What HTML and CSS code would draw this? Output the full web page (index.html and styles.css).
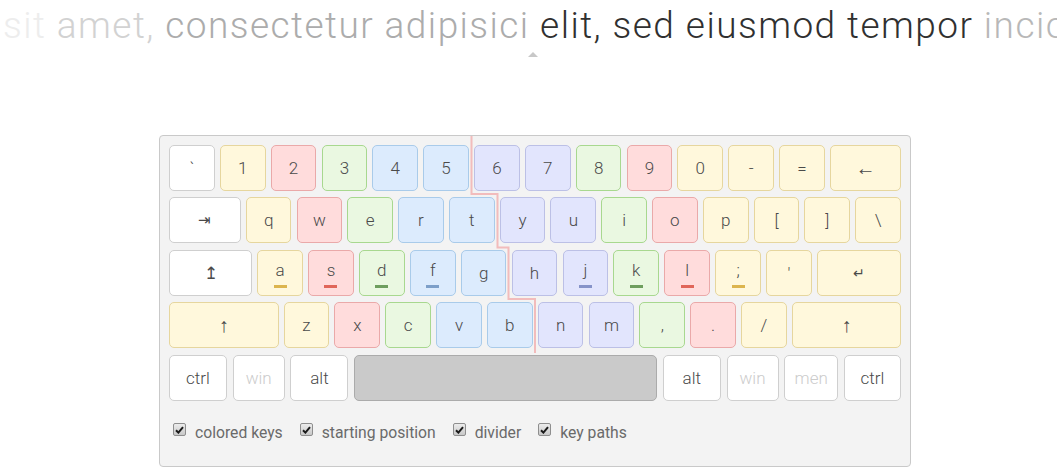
FILE: index.html
```html
<!DOCTYPE html>
<html lang="en">
<head>
    <meta charset="UTF-8">
    <title>Typing Trainer</title>
    <link rel="stylesheet" href="styles.css">
</head>
<body>
    <div class="ticker">
        <span class="t-gone">sit </span><span class="t-fade">amet, </span><span class="t-done">consectetur adipisici </span><span class="t-now">elit, sed eiusmod tempor </span><span class="t-next">incic</span>
    </div>
    <div class="caret"></div>

    <div class="keyboard">
        <svg class="divider" width="752" height="240" viewBox="0 0 752 240">
            <polyline points="311.5,0 311.5,58 337.5,58 337.5,111.5 348.5,111.5 348.5,163 375,163 375,217" fill="none" stroke="#f2bcbc" stroke-width="2"/>
        </svg>

        <div class="row">
            <div class="key white">`</div>
            <div class="key yellow">1</div>
            <div class="key red">2</div>
            <div class="key green">3</div>
            <div class="key blue">4</div>
            <div class="key blue">5</div>
            <div class="key purple">6</div>
            <div class="key purple">7</div>
            <div class="key green">8</div>
            <div class="key red">9</div>
            <div class="key yellow">0</div>
            <div class="key yellow">-</div>
            <div class="key yellow">=</div>
            <div class="key yellow backspace">&larr;</div>
        </div>
        <div class="row">
            <div class="key white tab">&#8677;</div>
            <div class="key yellow">q</div>
            <div class="key red">w</div>
            <div class="key green">e</div>
            <div class="key blue">r</div>
            <div class="key blue">t</div>
            <div class="key purple">y</div>
            <div class="key purple">u</div>
            <div class="key green">i</div>
            <div class="key red">o</div>
            <div class="key yellow">p</div>
            <div class="key yellow">[</div>
            <div class="key yellow">]</div>
            <div class="key yellow">\</div>
        </div>
        <div class="row">
            <div class="key white caps">&#8613;</div>
            <div class="key yellow home">a<span class="bar"></span></div>
            <div class="key red home">s<span class="bar"></span></div>
            <div class="key green home">d<span class="bar"></span></div>
            <div class="key blue home">f<span class="bar"></span></div>
            <div class="key blue">g</div>
            <div class="key purple">h</div>
            <div class="key purple home">j<span class="bar"></span></div>
            <div class="key green home">k<span class="bar"></span></div>
            <div class="key red home">l<span class="bar"></span></div>
            <div class="key yellow home">;<span class="bar"></span></div>
            <div class="key yellow">'</div>
            <div class="key yellow enter">&#8629;</div>
        </div>
        <div class="row">
            <div class="key yellow shift-l">&uarr;</div>
            <div class="key yellow">z</div>
            <div class="key red">x</div>
            <div class="key green">c</div>
            <div class="key blue">v</div>
            <div class="key blue">b</div>
            <div class="key purple">n</div>
            <div class="key purple">m</div>
            <div class="key green">,</div>
            <div class="key red">.</div>
            <div class="key yellow">/</div>
            <div class="key yellow shift-r">&uarr;</div>
        </div>
        <div class="row">
            <div class="key white mod-ctrl">ctrl</div>
            <div class="key white mod-win off">win</div>
            <div class="key white mod-alt">alt</div>
            <div class="key space"></div>
            <div class="key white mod-alt">alt</div>
            <div class="key white mod-win off">win</div>
            <div class="key white mod-men off">men</div>
            <div class="key white mod-ctrl2">ctrl</div>
        </div>

        <div class="options">
            <label class="option"><span class="check"><svg width="9" height="8" viewBox="0 0 9 8"><path d="M1 4.2 L3.4 6.6 L8 1.2" fill="none" stroke="#1a1a1a" stroke-width="2"/></svg></span>colored keys</label>
            <label class="option"><span class="check"><svg width="9" height="8" viewBox="0 0 9 8"><path d="M1 4.2 L3.4 6.6 L8 1.2" fill="none" stroke="#1a1a1a" stroke-width="2"/></svg></span>starting position</label>
            <label class="option"><span class="check"><svg width="9" height="8" viewBox="0 0 9 8"><path d="M1 4.2 L3.4 6.6 L8 1.2" fill="none" stroke="#1a1a1a" stroke-width="2"/></svg></span>divider</label>
            <label class="option"><span class="check"><svg width="9" height="8" viewBox="0 0 9 8"><path d="M1 4.2 L3.4 6.6 L8 1.2" fill="none" stroke="#1a1a1a" stroke-width="2"/></svg></span>key paths</label>
        </div>
    </div>
</body>
</html>
```

FILE: styles.css
```css
* {
    margin: 0;
    padding: 0;
    box-sizing: border-box;
    font-family: Roboto, "Liberation Sans", sans-serif;
}

body {
    background-color: white;
    width: 1057px;
    overflow: hidden;
}

/* Scrolling text line */
.ticker {
    white-space: nowrap;
    overflow: hidden;
    width: 1057px;
    height: 50px;
    padding-left: 3px;
    font-size: 37px;
    font-weight: 300;
    letter-spacing: 1.45px;
    line-height: 52px;
}

.t-gone { color: #ededed; }
.t-fade { color: #d2d2d2; }
.t-done { color: #acacac; }
.t-now  { color: #303030; }
.t-next { color: #b8b8b8; }

.caret {
    width: 0;
    height: 0;
    margin: 2px 0 0 528px;
    border-left: 5px solid transparent;
    border-right: 5px solid transparent;
    border-bottom: 5px solid #c8c8c8;
}

/* Keyboard */
.keyboard {
    position: relative;
    width: 752px;
    margin: 78px 0 0 159px;
    padding: 9px 9px 0 9px;
    background-color: #f3f3f3;
    border: 1px solid #c9c9c9;
    border-radius: 4px;
    height: 332px;
}

.divider {
    position: absolute;
    top: 0;
    left: 0;
    z-index: 2;
}

.row {
    display: flex;
    justify-content: space-between;
    margin-bottom: 6.4px;
}

.key {
    position: relative;
    width: 45.7px;
    height: 46px;
    display: flex;
    align-items: center;
    justify-content: center;
    border: 1px solid #cfcfcf;
    border-radius: 5px;
    font-size: 17px;
    font-weight: 300;
    color: #4a4a4a;
}

.white  { background-color: #ffffff; border-color: #cfcfcf; }
.yellow { background-color: #fff8dc; border-color: #e6d69e; }
.red    { background-color: #ffdcdc; border-color: #eaa9a9; }
.green  { background-color: #eaf8e1; border-color: #a8d88f; }
.blue   { background-color: #dcebfd; border-color: #a9cbea; }
.purple { background-color: #e2e5fd; border-color: #bcc0e6; }

.space {
    width: 303px;
    background-color: #cacaca;
    border-color: #ababab;
}

.backspace { width: 71px; font-size: 20px; }
.tab       { width: 71.7px; font-size: 15px; }
.caps      { width: 83px; }
.enter     { width: 84px; font-size: 14px; }
.shift-l   { width: 109.5px; font-size: 20px; }
.shift-r   { width: 109px; font-size: 20px; }

.mod-ctrl  { width: 58px; }
.mod-ctrl2 { width: 57px; }
.mod-win   { width: 52px; }
.mod-alt   { width: 58px; }
.mod-men   { width: 54px; }

.off {
    color: #cccccc;
}

.home {
    padding-bottom: 6px;
}

.bar {
    position: absolute;
    bottom: 7px;
    left: 50%;
    width: 13px;
    height: 3px;
    margin-left: -6.5px;
}

.yellow .bar { background-color: #dcb54e; }
.red .bar    { background-color: #e0665a; }
.green .bar  { background-color: #6e9e5e; }
.blue .bar   { background-color: #7d9fc9; }
.purple .bar { background-color: #8693c9; }

/* Options */
.options {
    display: flex;
    padding: 16px 0 0 4px;
}

.option {
    display: flex;
    align-items: center;
    margin-right: 17px;
    font-size: 15.7px;
    color: #6a6a6a;
}

.check {
    display: inline-flex;
    align-items: center;
    justify-content: center;
    width: 13px;
    height: 13px;
    margin: -5px 9px 0 0;
    border: 1px solid #8e8e8e;
    border-radius: 2px;
    background: linear-gradient(#ececec, #c8c8c8);
}
```
